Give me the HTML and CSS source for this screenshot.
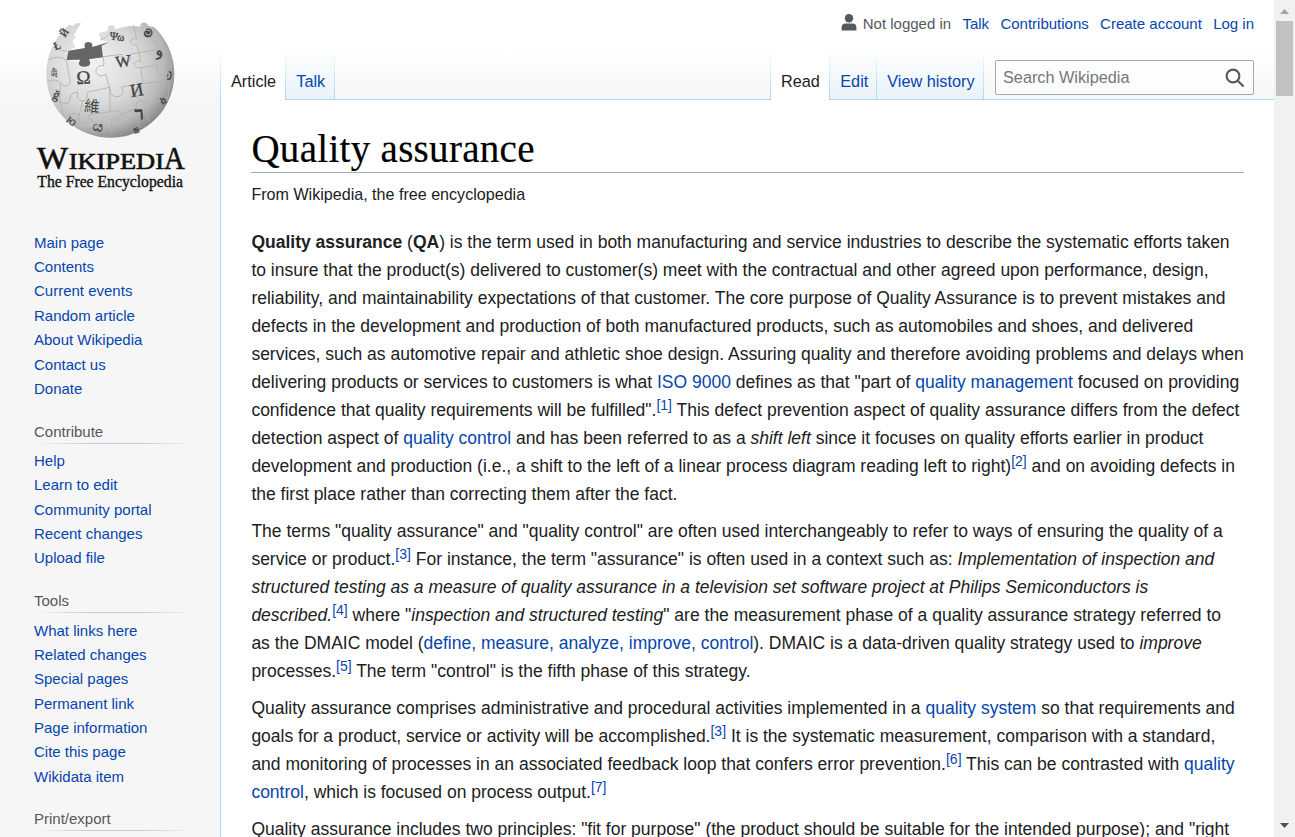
FILE: index.html
```html
<!DOCTYPE html>
<html lang="en">
<head>
<meta charset="utf-8">
<title>Quality assurance - Wikipedia</title>
<link rel="stylesheet" href="styles.css">
</head>
<body>
<div class="window">
<div class="page">
  <aside class="sidebar">
    <a class="logo" href="#">
      <svg width="180" height="200" viewBox="0 0 540 600" role="img">
        <defs>
          <radialGradient id="globe" cx="0.38" cy="0.36" r="0.68">
            <stop offset="0" stop-color="#f2f2f2"/>
            <stop offset="0.5" stop-color="#dadada"/>
            <stop offset="0.8" stop-color="#b8b8b8"/>
            <stop offset="1" stop-color="#858585"/>
          </radialGradient>
        </defs>
        <path fill="url(#globe)" d="M183 55H167L162 62L147 60L132 74A192 192 0 1 0 402 66L386 63Q379 50 368 53Q358 56 362 65Q328 58 284 73Q285 61 273 61Q260 62 263 77L236 84L242 105L262 110L247 116L250 155L188 174L140 164L143 137L165 128L158 106L169 97L162 92L172 72Z"/>
        <path fill="#666" d="M145 137L195 129Q189 113 204 111Q222 112 216 126L266 112L245 122L249 157L207 163Q219 184 193 185Q168 184 181 164L140 165Z"/>
        <g fill="none" stroke="#b0b0b0" stroke-width="2.5">
          <path d="M86 165Q112 148 140 165M104 121Q121 143 143 137M82 230Q110 218 121 235Q143 253 151 232L139 165M121 235L119 290Q146 306 150 282Q151 260 174 262Q166 286 187 288Q207 284 201 262L269 247"/>
          <path d="M250 155L252 181Q225 181 228 202Q239 220 257 207L269 247Q270 282 299 274Q315 266 305 246L369 236L362 188Q340 190 342 174Q351 164 362 169L352 121Q328 119 331 107Q339 96 350 102L340 61"/>
          <path d="M250 155L306 148Q299 170 318 174Q336 169 330 148L362 142L416 133Q431 144 433 157"/>
          <path d="M362 188L412 180Q409 211 430 211Q445 197 436 181L457 185M369 236L423 229Q444 220 449 244L442 285"/>
          <path d="M119 290L134 335Q159 321 178 328L189 288M178 328Q168 352 191 353Q211 349 206 330L271 320L269 247M271 320Q300 311 303 328Q298 347 274 340L276 395"/>
          <path d="M303 328L350 310Q343 287 363 286Q379 292 373 310L418 291L423 229M373 310L389 350M206 330L226 363Q245 359 258 381M350 310L358 370"/>
          <path d="M274 79Q268 94 242 105M402 70L390 101Q409 102 416 133"/>
        </g>
        <g class="glyphs">
          <text x="170" y="238" font-size="57" transform="rotate(-3 170 238)">Ω</text>
          <text x="289" y="188" font-size="49" transform="rotate(-8 289 188)">W</text>
          <text x="334" y="277" font-size="55" transform="rotate(-10 334 277)">И</text>
          <text x="191" y="319" font-size="47" stroke-width="0" transform="rotate(5 191 319)">維</text>
          <text x="346" y="344" font-size="52" stroke-width="3" transform="rotate(-4 346 344)">ר</text>
          <text x="268" y="103" font-size="33" transform="rotate(8 268 103)">Ψω</text>
          <text x="407" y="153" font-size="46" transform="rotate(-10 407 153)">و</text>
          <text x="369" y="91" font-size="33" stroke-width="3" transform="rotate(25 369 91)">ම</text>
          <text x="135" y="98" font-size="31" transform="rotate(-55 135 98)">Й</text>
          <text x="106" y="136" font-size="33" transform="rotate(-20 106 136)">Ł</text>
          <text x="92" y="217" font-size="42" textLength="19" lengthAdjust="spacingAndGlyphs">ঞa</text>
          <text x="96" y="278" font-size="38" transform="rotate(20 96 278)">ğ</text>
          <text x="217" y="374" font-size="43" transform="rotate(12 217 374)">ය</text>
          <text x="434" y="222" font-size="32" transform="rotate(-75 446 215)">ت</text>
          <text x="426" y="300" font-size="28" transform="rotate(-25 426 300)">ង</text>
          <text x="137" y="348" font-size="27" transform="rotate(38 137 348)">Ю</text>
          <text x="341" y="380" font-size="21" transform="rotate(-18 341 380)">ஐ</text>
        </g>
        <g class="wordmark">
          <text x="51" y="491" font-size="96" textLength="93" lengthAdjust="spacingAndGlyphs">W</text>
          <text x="146" y="491" font-size="67" textLength="286" lengthAdjust="spacingAndGlyphs">IKIPEDI</text>
          <text x="432" y="491" font-size="96" textLength="62" lengthAdjust="spacingAndGlyphs">A</text>
          <text class="tagline" x="52" y="546" font-size="48" textLength="437" lengthAdjust="spacingAndGlyphs">The Free Encyclopedia</text>
        </g>
      </svg>
    </a>
    <nav class="portal">
      <ul>
        <li><a href="#">Main page</a></li>
        <li><a href="#">Contents</a></li>
        <li><a href="#">Current events</a></li>
        <li><a href="#">Random article</a></li>
        <li><a href="#">About Wikipedia</a></li>
        <li><a href="#">Contact us</a></li>
        <li><a href="#">Donate</a></li>
      </ul>
    </nav>
    <nav class="portal">
      <h3>Contribute</h3>
      <ul>
        <li><a href="#">Help</a></li>
        <li><a href="#">Learn to edit</a></li>
        <li><a href="#">Community portal</a></li>
        <li><a href="#">Recent changes</a></li>
        <li><a href="#">Upload file</a></li>
      </ul>
    </nav>
    <nav class="portal">
      <h3>Tools</h3>
      <ul>
        <li><a href="#">What links here</a></li>
        <li><a href="#">Related changes</a></li>
        <li><a href="#">Special pages</a></li>
        <li><a href="#">Permanent link</a></li>
        <li><a href="#">Page information</a></li>
        <li><a href="#">Cite this page</a></li>
        <li><a href="#">Wikidata item</a></li>
      </ul>
    </nav>
    <nav class="portal">
      <h3>Print/export</h3>
    </nav>
  </aside>

  <div class="main">
    <header class="head">
      <div class="personal">
        <svg class="user-icon" width="16" height="17" viewBox="0 0 16 17"><circle cx="8" cy="4.3" r="4.2" fill="#54595d"/><path fill="#54595d" d="M.6 16.5v-2.8Q.6 9.6 4.6 9.6h6.8q4 0 4 4.1v2.8z"/></svg>
        <span class="anon">Not logged in</span>
        <a href="#">Talk</a>
        <a href="#">Contributions</a>
        <a href="#">Create account</a>
        <a href="#">Log in</a>
      </div>
      <div class="tabs">
        <a class="tab active article" href="#">Article</a>
        <a class="tab talk" href="#">Talk</a>
        <div class="filler"></div>
        <a class="tab active read" href="#">Read</a>
        <a class="tab edit" href="#">Edit</a>
        <a class="tab history" href="#">View history</a>
        <div class="search">
          <div class="search-box">
            <span>Search Wikipedia</span>
            <svg width="20" height="20" viewBox="0 0 20 20" fill="none" stroke="#54595d" stroke-width="2.1"><circle cx="8" cy="8" r="6.4"/><path d="M12.5 12.5L18.6 18.6"/></svg>
          </div>
        </div>
      </div>
    </header>
    <main class="content">
      <h1>Quality assurance</h1>
      <div class="sitesub">From Wikipedia, the free encyclopedia</div>
      <p><b>Quality assurance</b> (<b>QA</b>) is the term used in both manufacturing and service industries to describe the systematic efforts taken<br>to insure that the product(s) delivered to customer(s) meet with the contractual and other agreed upon performance, design,<br>reliability, and maintainability expectations of that customer. The core purpose of Quality Assurance is to prevent mistakes and<br>defects in the development and production of both manufactured products, such as automobiles and shoes, and delivered<br>services, such as automotive repair and athletic shoe design. Assuring quality and therefore avoiding problems and delays when<br>delivering products or services to customers is what <a href="#">ISO 9000</a> defines as that "part of <a href="#">quality management</a> focused on providing<br>confidence that quality requirements will be fulfilled".<sup><a href="#">[1]</a></sup> This defect prevention aspect of quality assurance differs from the defect<br>detection aspect of <a href="#">quality control</a> and has been referred to as a <i>shift left</i> since it focuses on quality efforts earlier in product<br>development and production (i.e., a shift to the left of a linear process diagram reading left to right)<sup><a href="#">[2]</a></sup> and on avoiding defects in<br>the first place rather than correcting them after the fact.</p>
      <p>The terms "quality assurance" and "quality control" are often used interchangeably to refer to ways of ensuring the quality of a<br>service or product.<sup><a href="#">[3]</a></sup> For instance, the term "assurance" is often used in a context such as: <i>Implementation of inspection and<br>structured testing as a measure of quality assurance in a television set software project at Philips Semiconductors is<br>described.</i><sup><a href="#">[4]</a></sup> where "<i>inspection and structured testing</i>" are the measurement phase of a quality assurance strategy referred to<br>as the DMAIC model (<a href="#">define, measure, analyze, improve, control</a>). DMAIC is a data-driven quality strategy used to <i>improve</i><br>processes.<sup><a href="#">[5]</a></sup> The term "control" is the fifth phase of this strategy.</p>
      <p>Quality assurance comprises administrative and procedural activities implemented in a <a href="#">quality system</a> so that requirements and<br>goals for a product, service or activity will be accomplished.<sup><a href="#">[3]</a></sup> It is the systematic measurement, comparison with a standard,<br>and monitoring of processes in an associated feedback loop that confers error prevention.<sup><a href="#">[6]</a></sup> This can be contrasted with <a href="#">quality<br>control</a>, which is focused on process output.<sup><a href="#">[7]</a></sup></p>
      <p>Quality assurance includes two principles: "fit for purpose" (the product should be suitable for the intended purpose); and "right</p>
    </main>
  </div>
</div>
<div class="scrollbar">
  <svg width="21" height="21" viewBox="0 0 21 21"><path fill="#a3a3a3" d="M6 14L10.5 9L15 14z"/></svg>
  <div class="thumb"></div>
  <svg class="down" width="21" height="21" viewBox="0 0 21 21"><path fill="#505050" d="M6 7L10.5 12L15 7z"/></svg>
</div>
</div>
</body>
</html>
```

FILE: styles.css
```css
* { box-sizing: border-box; }
html, body { margin: 0; height: 100%; overflow: hidden; }
body {
  font-family: "Liberation Sans", Arial, sans-serif;
  color: #202122;
  background: #f6f6f6;
}
a { color: #0645ad; text-decoration: none; }
.window { display: flex; width: 1295px; height: 837px; overflow: hidden; }
.page {
  display: flex;
  flex: 1;
  height: 837px;
  background: linear-gradient(#fff 50%, #f6f6f6 100%) 0 0 / 100% 100px no-repeat #f6f6f6;
}

/* Sidebar */
.sidebar { width: 220px; flex: none; overflow: hidden; }
.logo { display: block; height: 225.3px; padding: 5px 0 0 20px; }
.logo svg { display: block; }
.glyphs { font-family: "Liberation Serif", "Noto Sans CJK SC", serif; fill: #444; stroke: #444; stroke-width: 1; }
.wordmark { font-family: "Liberation Serif", serif; fill: #111; stroke: #111; stroke-width: 1.8; }
.tagline { stroke-width: 1; }
.portal { padding: 0 0 0 34px; margin-bottom: 14.1px; font-size: 15px; }
.portal h3 {
  margin: 0 25px 0 0;
  height: 28px;
  padding-top: 7px;
  font-size: 15px;
  line-height: 18px;
  font-weight: normal;
  color: #54595d;
  background: linear-gradient(to right, rgba(200, 204, 209, 0) 0, #c8ccd1 33%, #c8ccd1 66%, rgba(200, 204, 209, 0) 100%) 0 100% / 100% 1px no-repeat;
}
.portal ul { list-style: none; margin: 0; padding: 5.6px 0 0; }
.portal li { line-height: 16.875px; padding: 3.75px 0; }

/* Header */
.main { flex: 1; display: flex; flex-direction: column; min-width: 0; }
.head { height: 100px; flex: none; }
.personal {
  display: flex;
  justify-content: flex-end;
  align-items: center;
  height: 50px;
  padding: 0 20px 3px 0;
  font-size: 15px;
  gap: 11.3px;
}
.user-icon { margin: -3px -5.8px 0 0; }
.anon { color: #54595d; }
.tabs { display: flex; height: 50px; font-size: 16.25px; }
.tab {
  padding: 22px 0 0 11.25px;
  line-height: 19px;
  border-bottom: 1px solid #a7d7f9;
  background:
    linear-gradient(rgba(167, 215, 249, 0), #a7d7f9) 0 0 / 1px 50px no-repeat,
    linear-gradient(#fff, #e8f2f8);
}
.tab.active {
  padding-left: 11px;
  color: #202122;
  border-bottom: 0;
  background: linear-gradient(rgba(167, 215, 249, 0), #a7d7f9) 0 0 / 1px 50px no-repeat, #fff;
}
.article { width: 65px; }
.talk { width: 49px; }
.read { width: 59px; }
.edit { width: 47px; }
.history { width: 107px; }
.filler, .search {
  border-bottom: 1px solid #a7d7f9;
  background: linear-gradient(rgba(167, 215, 249, 0), #a7d7f9) 0 0 / 1px 50px no-repeat;
}
.filler { flex: 1; }
.search { width: 291px; padding: 10px 20px 0 12px; }
.search-box {
  display: flex;
  align-items: center;
  justify-content: space-between;
  height: 35px;
  padding: 0 8px 0 7px;
  border: 1px solid #a2a9b1;
  border-radius: 2px;
  background: rgba(255, 255, 255, 0.5);
  color: #72777d;
}

/* Article */
.content {
  flex: 1;
  min-height: 0;
  overflow: hidden;
  padding: 25px 30px 0 30.4px;
  border-left: 1px solid #a7d7f9;
  background: #fff;
}
h1 {
  margin: 0;
  height: 48px;
  border-bottom: 1px solid #a2a9b1;
  font: normal 39px/47px "Liberation Serif", serif;
  letter-spacing: 0.3px;
  -webkit-text-stroke: 0.2px #000;
  color: #000;
}
.sitesub { height: 55px; padding-top: 11px; font-size: 16.1px; line-height: 21px; }
p { margin: 0 0 8.9px; font-size: 17.5px; line-height: 28px; white-space: nowrap; }
sup { font-size: 14px; line-height: 1; vertical-align: 6px; }

/* Scrollbar */
.scrollbar { display: flex; flex-direction: column; width: 21px; background: #f1f1f1; }
.scrollbar svg { display: block; flex: none; }
.thumb { height: 75px; margin: 0 2px; background: #c1c1c1; }
.down { margin-top: auto; }
```
